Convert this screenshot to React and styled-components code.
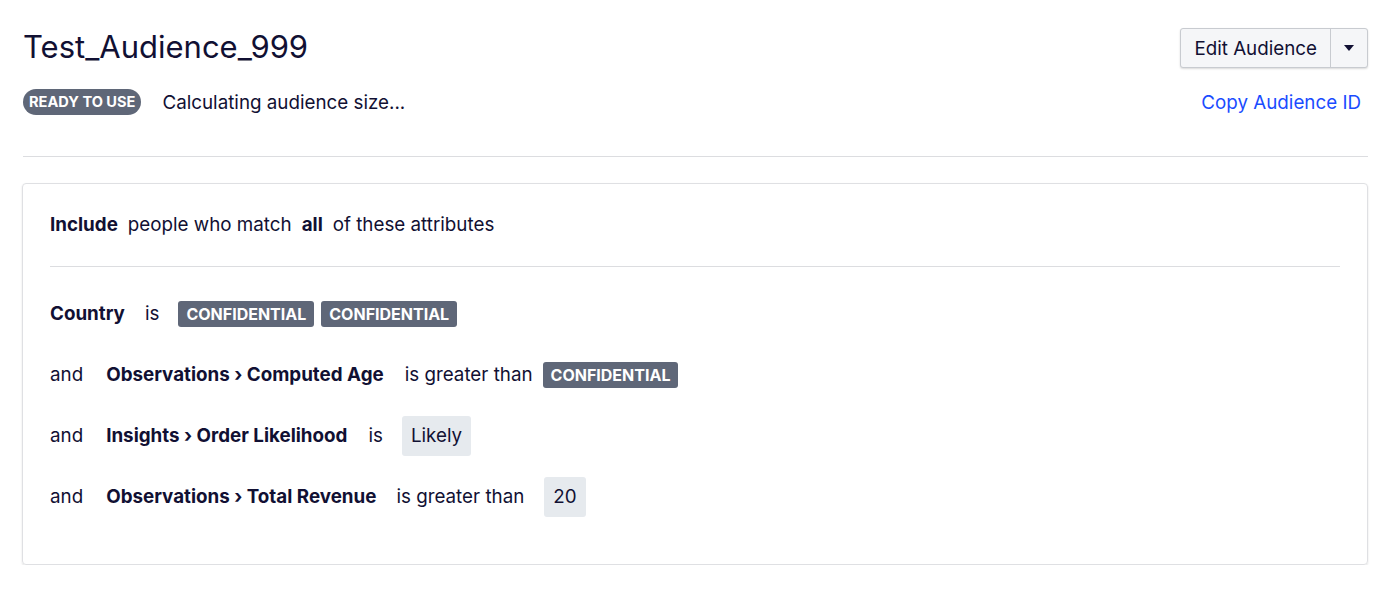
import React from "react";
import styled, { createGlobalStyle } from "styled-components";

const GlobalStyle = createGlobalStyle`
  body {
    margin: 0;
    background: #ffffff;
    font-family: Inter, "Noto Sans", sans-serif;
    color: #111033;
  }
`;

const Page = styled.div`
  padding: 24px 24px 0 23px;
`;

const Header = styled.div`
  display: flex;
  justify-content: space-between;
  align-items: flex-start;
  padding-bottom: 41px;
  border-bottom: 1px solid #dcdde0;
`;

const TitleBlock = styled.div`
  display: flex;
  flex-direction: column;
  gap: 19px;
`;

const Title = styled.h1`
  margin: 0;
  font-size: 31px;
  font-weight: 400;
  line-height: 46px;
`;

const StatusRow = styled.div`
  display: flex;
  align-items: center;
  gap: 21px;
  font-size: 18.8px;
`;

const Pill = styled.span`
  display: inline-flex;
  align-items: center;
  height: 26px;
  padding: 0 6px;
  border-radius: 13px;
  background: #5f6778;
  color: #fff;
  font-size: 14.6px;
  font-weight: 700;
`;

const Actions = styled.div`
  display: flex;
  flex-direction: column;
  align-items: flex-end;
  gap: 23px;
  padding-top: 4px;
`;

const SplitButton = styled.div`
  display: flex;
  border: 1px solid #c8cbd0;
  border-radius: 3px;
  background: #f5f6f8;
  box-shadow: 0 1px 2px rgba(0, 0, 0, 0.15);
`;

const ButtonPart = styled.button`
  height: 38px;
  border: none;
  background: transparent;
  font-family: inherit;
  font-size: 18.8px;
  color: #111033;
  padding: 0 13px;
  border-left: ${(p) => (p.icon ? "1px solid #c8cbd0" : "none")};
  display: flex;
  align-items: center;
  cursor: pointer;
`;

const LinkText = styled.a`
  color: #1a4cff;
  font-size: 18.8px;
  margin-right: 7px;
  text-decoration: none;
  cursor: pointer;
`;

const Card = styled.div`
  margin-top: 26px;
  margin-left: -1px;
  border: 1px solid #dfe0e3;
  border-radius: 4px;
  box-shadow: 0 1px 2px rgba(0, 0, 0, 0.12);
  padding: 28px 27px 37px 27px;
`;

const Intro = styled.div`
  font-size: 18.8px;
  line-height: 26px;
  padding-bottom: 28px;
  border-bottom: 1px solid #dcdde0;
  margin-bottom: 16px;
`;

const Strong = styled.b`
  font-weight: 700;
  margin: ${(p) => p.m || "0"};
`;

const Rule = styled.div`
  display: flex;
  align-items: center;
  height: 61px;
  font-size: 18.8px;
`;

const Word = styled.span`
  margin-right: ${(p) => p.gap}px;
  font-weight: ${(p) => (p.bold ? 700 : 400)};
`;

const Secret = styled.span`
  display: inline-flex;
  align-items: center;
  height: 26px;
  padding: 0 8px;
  border-radius: 3px;
  background: #5f6778;
  color: #fff;
  font-size: 16px;
  font-weight: 700;
  margin-right: 7px;
`;

const Value = styled.span`
  display: inline-flex;
  align-items: center;
  height: 40px;
  padding: 0 9px;
  border-radius: 3px;
  background: #e6eaee;
`;

const Caret = () => (
  <svg width="10" height="6" viewBox="0 0 10 6">
    <path d="M0 0h10L5 6z" fill="#111033" />
  </svg>
);

export default function App() {
  return (
    <Page>
      <GlobalStyle />
      <Header>
        <TitleBlock>
          <Title>Test_Audience_999</Title>
          <StatusRow>
            <Pill>READY TO USE</Pill>
            <span>Calculating audience size...</span>
          </StatusRow>
        </TitleBlock>
        <Actions>
          <SplitButton>
            <ButtonPart>Edit Audience</ButtonPart>
            <ButtonPart icon>
              <Caret />
            </ButtonPart>
          </SplitButton>
          <LinkText>Copy Audience ID</LinkText>
        </Actions>
      </Header>
      <Card>
        <Intro>
          <Strong m="0 10px 0 0">Include</Strong>people who match
          <Strong m="0 10px">all</Strong>of these attributes
        </Intro>
        <Rule>
          <Word bold gap={20}>Country</Word>
          <Word gap={19}>is</Word>
          <Secret>CONFIDENTIAL</Secret>
          <Secret>CONFIDENTIAL</Secret>
        </Rule>
        <Rule>
          <Word gap={23}>and</Word>
          <Word bold gap={21}>Observations › Computed Age</Word>
          <Word gap={10}>is greater than</Word>
          <Secret>CONFIDENTIAL</Secret>
        </Rule>
        <Rule>
          <Word gap={23}>and</Word>
          <Word bold gap={21}>Insights › Order Likelihood</Word>
          <Word gap={19}>is</Word>
          <Value>Likely</Value>
        </Rule>
        <Rule>
          <Word gap={23}>and</Word>
          <Word bold gap={20}>Observations › Total Revenue</Word>
          <Word gap={20}>is greater than</Word>
          <Value>20</Value>
        </Rule>
      </Card>
    </Page>
  );
}
